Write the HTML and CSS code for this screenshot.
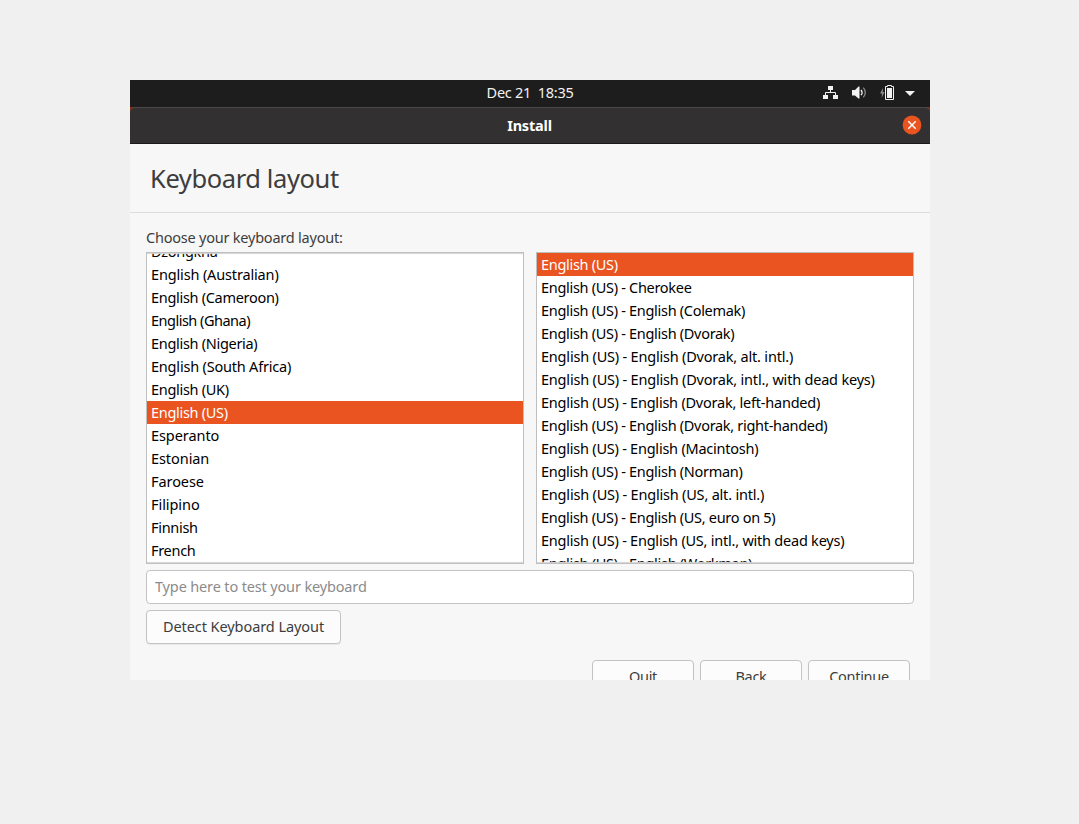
FILE: index.html
```html
<!DOCTYPE html>
<html lang="en">
<head>
<meta charset="utf-8">
<title>Install</title>
<link rel="stylesheet" href="styles.css">
</head>
<body>
<main class="screen">
  <div class="topbar">
    <span class="clock">Dec 21&nbsp; 18:35</span>
    <div class="tray">
      <svg class="icon" width="16" height="16" viewBox="0 0 16 16"><path fill="#f2f2f2" d="M6 1h5v4H6zM1 10h5v4H1zM11 10h5v4h-5z"/><path fill="none" stroke="#f2f2f2" stroke-width="1" d="M8.500 5v3M3.500 10V7.500h10V10"/></svg>
      <svg class="icon" width="16" height="16" viewBox="0 0 16 16"><path fill="#f2f2f2" d="M1 5h3l3.500-3.500H8.500v12H7.500L4 10.500H1z"/><path fill="none" stroke="#f2f2f2" stroke-width="1.300" d="M10 4.800q2.200 2.700 0 5.400"/><path fill="none" stroke="#8a8a8a" stroke-width="1.300" d="M12.300 2.700q4 4.800 0 9.600"/></svg>
      <svg class="icon" width="16" height="16" viewBox="0 0 16 16"><path fill="#8a8a8a" d="M3 3L0 8.500h2L1.600 13 4.500 7H2.800z"/><path fill="none" stroke="#f2f2f2" d="M7.500.5h4v1h2v13h-8v-13h2z"/><path fill="#f2f2f2" d="M7 3h5v10H7z"/></svg>
      <svg class="icon arrow" width="10" height="5" viewBox="0 0 10 5"><path fill="#f2f2f2" d="M0 0h10L5 5z"/></svg>
    </div>
  </div>
  <div class="corners">
    <header class="titlebar">
      <span class="title">Install</span>
      <svg class="close" width="20" height="20" viewBox="0 0 20 20"><circle cx="10" cy="10" r="9.400" fill="#e95420"/><path fill="none" stroke="#fff" stroke-width="1.500" d="M6.300 6.300l7.400 7.400M13.700 6.300l-7.400 7.400"/></svg>
    </header>
  </div>
  <h1 class="heading"><span>Keyboard layout</span></h1>
  <section class="content">
    <p class="label">Choose your keyboard layout:</p>
    <div class="lists">
      <ul class="list scrolled">
        <li>Dzongkha</li>
        <li class="loose">English (Australian)</li>
        <li>English (Cameroon)</li>
        <li class="tight">English (Ghana)</li>
        <li>English (Nigeria)</li>
        <li class="roomy">English (South Africa)</li>
        <li>English (UK)</li>
        <li class="selected">English (US)</li>
        <li class="wide">Esperanto</li>
        <li class="wide">Estonian</li>
        <li class="wide">Faroese</li>
        <li class="wide">Filipino</li>
        <li>Finnish</li>
        <li>French</li>
      </ul>
      <ul class="list variants">
        <li class="selected">English (US)</li>
        <li>English (US) - Cherokee</li>
        <li>English (US) - English (Colemak)</li>
        <li>English (US) - English (Dvorak)</li>
        <li class="roomy">English (US) - English (Dvorak, alt. intl.)</li>
        <li class="roomy">English (US) - English (Dvorak, intl., with dead keys)</li>
        <li class="easy">English (US) - English (Dvorak, left-handed)</li>
        <li>English (US) - English (Dvorak, right-handed)</li>
        <li class="easy">English (US) - English (Macintosh)</li>
        <li>English (US) - English (Norman)</li>
        <li class="roomy">English (US) - English (US, alt. intl.)</li>
        <li>English (US) - English (US, euro on 5)</li>
        <li class="easy">English (US) - English (US, intl., with dead keys)</li>
        <li>English (US) - English (Workman)</li>
      </ul>
    </div>
    <input class="entry" type="text" placeholder="Type here to test your keyboard">
    <button class="button detect">Detect Keyboard Layout</button>
    <div class="actions">
      <button class="button">Quit</button>
      <button class="button">Back</button>
      <button class="button">Continue</button>
    </div>
  </section>
</main>
</body>
</html>
```
FILE: styles.css
```css
* { box-sizing: border-box; }
body {
  margin: 0;
  background: #f0f0f0;
  font: 14.5px/23px "Noto Sans", sans-serif;
  letter-spacing: -0.3px;
  color: #3d3d3d;
}
.screen {
  width: 800px;
  height: 600px;
  margin: 80px 0 0 130px;
  overflow: hidden;
  display: flex;
  flex-direction: column;
  background: #f7f7f7;
}
.topbar, .titlebar {
  display: grid;
  grid-template-columns: 1fr auto 1fr;
  align-items: center;
}
.topbar { height: 27px; flex: none; padding-bottom: 2px; background: #1d1d1d; color: #f2f2f2; }
.clock { grid-column: 2; }
.tray { display: flex; justify-content: flex-end; align-items: center; gap: 13px; margin-top: 1px; padding-right: 15px; }
.arrow { margin: 1px 0 0 -4px; }
.corners { flex: none; background: #8a2f0a; }
.titlebar {
  height: 37px;
  background: #333031;
  border-top: 1px solid #4a4848;
  border-bottom: 1px solid #1c1b1b;
  border-radius: 5px 5px 0 0;
  color: #fff;
}
.title { grid-column: 2; font-weight: 700; letter-spacing: -0.2px; margin-right: 1px; }
.close { justify-self: end; margin-right: 8px; margin-top: -2px; }
.heading {
  flex: none;
  height: 69px;
  margin: 0;
  padding: 0 20px;
  display: flex;
  align-items: center;
  border-bottom: 1px solid #dcdcdc;
  font-size: 25.500px;
  font-weight: 400;
  letter-spacing: -0.4px;
}
.content { flex: none; padding: 13px 16px 0; display: flex; flex-direction: column; }
.label { margin: 0 0 3px; height: 23px; letter-spacing: -0.22px; }
.lists { display: grid; grid-template-columns: 1fr 1fr; gap: 12px; }
.list {
  height: 312px;
  margin: 0;
  padding: 0;
  list-style: none;
  overflow: hidden;
  border: 1px solid #bfbfbf;
  background: #fff;
  color: #000;
  position: relative;
}
.list li { height: 23px; padding-left: 4px; white-space: nowrap; }
.tight { letter-spacing: -0.5px; }
.easy { letter-spacing: -0.23px; }
.roomy { letter-spacing: -0.2px; }
.loose { letter-spacing: -0.15px; }
.wide { letter-spacing: -0.07px; }
.scrolled li:first-child { margin-top: -13px; }
.list .selected { background: #e95420; color: #fff; }
.list::after {
  content: "";
  position: absolute;
  inset: 0;
  box-shadow: inset 0 -2px 1px -1px #d5d5d5;
}
.scrolled::after { box-shadow: inset 0 2px 1px -1px #d5d5d5, inset 0 -2px 1px -1px #d5d5d5; }
.entry, .button {
  height: 34px;
  border: 1px solid #c3c3c3;
  border-radius: 4px;
  font: inherit;
  letter-spacing: inherit;
  color: #3d3d3d;
}
.entry { margin-top: 6px; padding: 0 8px 2px; background: #fff; letter-spacing: -0.15px; }
.entry::placeholder { color: #8b8b8b; }
.button { width: 102px; padding: 0 0 2px; background: #fcfcfc; box-shadow: 0 1px 1px rgba(0, 0, 0, .06); }
.detect { width: 195px; margin-top: 6px; letter-spacing: -0.07px; }
.actions { display: flex; justify-content: flex-end; gap: 6px; margin: 16px 4px 0 0; }
```
